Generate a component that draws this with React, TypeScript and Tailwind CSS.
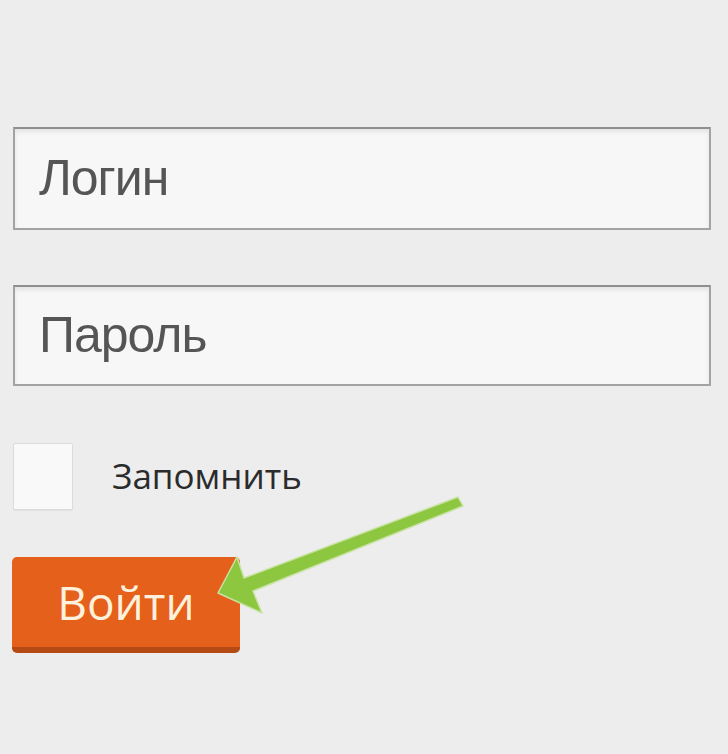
import React from 'react';

// Форма входа: логин, пароль, «Запомнить» и кнопка со стрелкой-указателем.
const GreenArrow: React.FC = () => (
  <svg className="absolute left-0 top-0 pointer-events-none" width="728" height="754" viewBox="0 0 728 754">
    <path
      d="M458 497 L463 506 L253 591 L262 613 L218 593 L237 557 L244 578 Z"
      fill="#8dc63f"
      stroke="#c9e3a4"
      strokeWidth="1.5"
      strokeLinejoin="round"
    />
  </svg>
);

export default function App() {
  return (
    <div className="relative w-[728px] h-[754px] bg-[#ededed] overflow-hidden" style={{ fontFamily: '"Liberation Sans", Arial, sans-serif' }}>
      <div className="flex flex-col pt-[127px] pl-[13px] pr-[17px]">
        <div className="h-[103px] flex items-center px-[24px] bg-[#f7f7f7] border-2 border-[#a3a3a3] border-t-[#8f8f8f] shadow-[inset_0_3px_4px_rgba(0,0,0,0.08)]">
          <span className="text-[50px] text-[#555] tracking-[-1px]">Логин</span>
        </div>
        <div className="mt-[55px] h-[101px] flex items-center px-[24px] bg-[#f7f7f7] border-2 border-[#a3a3a3] border-t-[#8f8f8f] shadow-[inset_0_3px_4px_rgba(0,0,0,0.08)]">
          <span className="text-[50px] text-[#555] tracking-[-1px]">Пароль</span>
        </div>
        <label className="mt-[57px] flex items-center gap-[39px]">
          <span className="w-[60px] h-[67px] bg-[#f9f9f9] border border-[#dcdcdc] rounded-[2px] shadow-[0_1px_1px_rgba(0,0,0,0.06)]" />
          <span className="text-[35px] text-[#2b2b2b]" style={{ fontFamily: '"Open Sans", "Noto Sans", sans-serif' }}>Запомнить</span>
        </label>
        <button className="mt-[47px] w-[228px] h-[96px] -ml-px flex items-center justify-center rounded-[5px] bg-[#e5601b] border-b-[6px] border-[#b54a14] text-[#fdf0dc] text-[46px]" style={{ fontFamily: '"Open Sans", "Noto Sans", sans-serif' }}>
          Войти
        </button>
      </div>
      <GreenArrow />
    </div>
  );
}
